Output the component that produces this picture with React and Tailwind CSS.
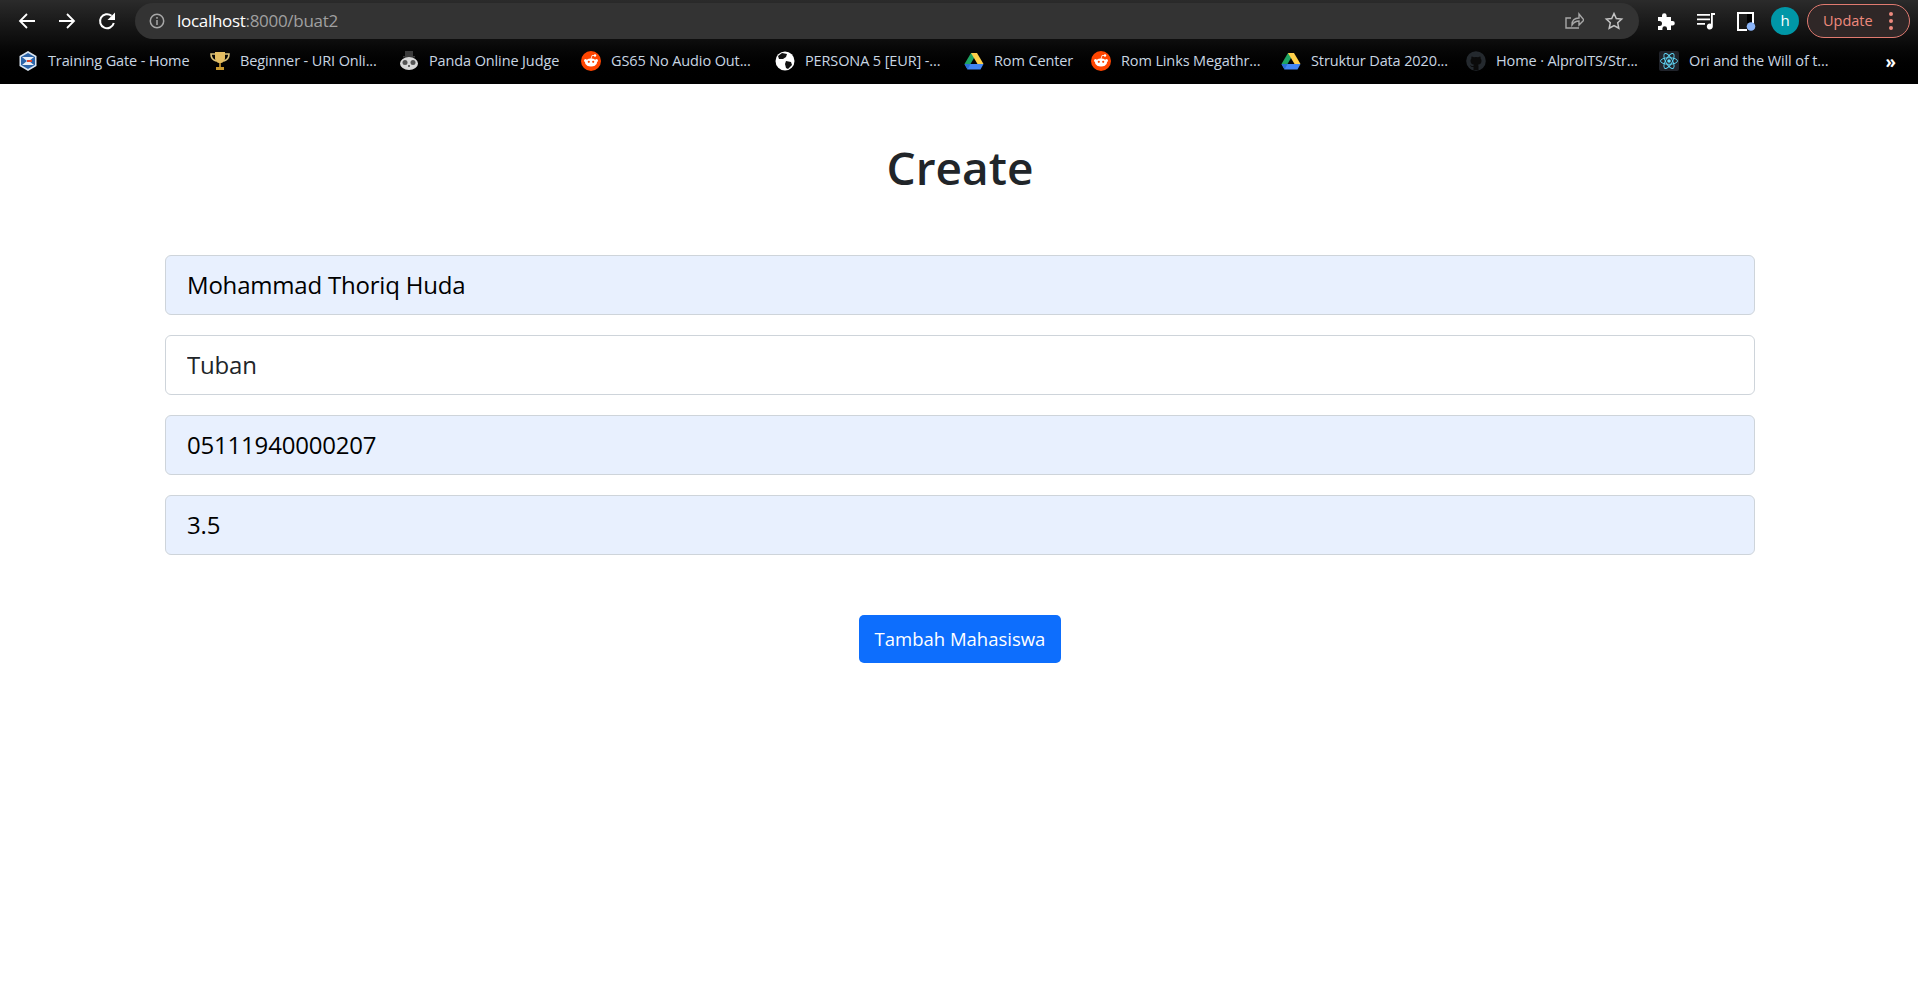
const bookmarks = [
  { icon: 'gate', label: 'Training Gate - Home', width: 'w-[192px]' },
  { icon: 'trophy', label: 'Beginner - URI Onli...', width: 'w-[189px]' },
  { icon: 'panda', label: 'Panda Online Judge', width: 'w-[182px]' },
  { icon: 'reddit', label: 'GS65 No Audio Out...', width: 'w-[194px]' },
  { icon: 'globe', label: 'PERSONA 5 [EUR] -...', width: 'w-[189px]' },
  { icon: 'drive', label: 'Rom Center', width: 'w-[127px]' },
  { icon: 'reddit', label: 'Rom Links Megathr...', width: 'w-[190px]' },
  { icon: 'drive', label: 'Struktur Data 2020...', width: 'w-[185px]' },
  { icon: 'github', label: 'Home · AlproITS/Str...', width: 'w-[193px]' },
  { icon: 'react', label: 'Ori and the Will of t...', width: 'w-[170px]' },
]

function Favicon({ type }) {
  if (type === 'gate') {
    return (
      <svg viewBox="0 0 20 20" className="h-5 w-5">
        <path d="M10 0 18.500 5v10L10 20 1.500 15V5z" fill="#dbe6f2" />
        <path d="M10 2 17 6v8l-7 4-7-4V6z" fill="#2a63a8" />
        <path d="M4 6h12l-5 4 5 4H4l5-4z" fill="#e9eef5" />
        <path d="M9 9h5v2H9z" fill="#d8452e" />
      </svg>
    )
  }
  if (type === 'trophy') {
    return (
      <svg viewBox="0 0 20 20" className="h-5 w-5">
        <path d="M5 3H1c0 4 2 6 5 7M15 3h4c0 4-2 6-5 7" fill="none" stroke="#d9c27c" strokeWidth="1.600" />
        <path d="M5 1h10v6c0 3-2 5-5 5S5 10 5 7z" fill="#e3bd62" />
        <path d="M9 12h2v4H9z" fill="#a87f28" />
        <path d="M6 16h8v3H6z" fill="#c9992f" />
      </svg>
    )
  }
  if (type === 'panda') {
    return (
      <svg viewBox="0 0 20 20" className="h-5 w-5">
        <path d="M6 0h8v5H6zM4 5h12v1.500H4z" fill="#3b3b3b" />
        <ellipse cx="10" cy="12.500" rx="9" ry="6.500" fill="#d8d8d8" />
        <ellipse cx="6" cy="11.500" rx="2.500" ry="2.500" fill="#555" />
        <ellipse cx="14" cy="11.500" rx="2.500" ry="2.500" fill="#555" />
        <circle cx="10" cy="15" r="1" fill="#444" />
      </svg>
    )
  }
  if (type === 'reddit') {
    return (
      <svg viewBox="0 0 20 20" className="h-5 w-5">
        <circle cx="10" cy="10" r="10" fill="#ff4500" />
        <ellipse cx="10" cy="11.500" rx="6" ry="4" fill="#fff" />
        <circle cx="4.500" cy="9.500" r="1.500" fill="#fff" />
        <circle cx="15.500" cy="9.500" r="1.500" fill="#fff" />
        <circle cx="14" cy="4.500" r="1.200" fill="#fff" />
        <path d="M10 8 11 4.500 14 4.500" stroke="#fff" strokeWidth="0.800" fill="none" />
        <circle cx="7.800" cy="10.800" r="1.100" fill="#ff4500" />
        <circle cx="12.200" cy="10.800" r="1.100" fill="#ff4500" />
      </svg>
    )
  }
  if (type === 'globe') {
    return (
      <svg viewBox="0 0 20 20" className="h-5 w-5">
        <circle cx="10" cy="10" r="9.500" fill="#fff" />
        <path d="M7 2 12 3 11 6 8 8 4 8 3 5zM11 10l5 1 1 3-4 4-2-1-1-4z" fill="#111" />
      </svg>
    )
  }
  if (type === 'drive') {
    return (
      <svg viewBox="0 0 20 20" className="h-5 w-5">
        <path d="M7 2h6l-6.500 11H.500z" fill="#1fa463" />
        <path d="M7 2h6l6.500 11h-6z" fill="#ffd04b" />
        <path d="M4 13h15.500l-3 5.500H3.500L.500 13z" fill="#4285f4" />
        <path d="M.500 13h6l-3 5.500z" fill="#2a6fd6" />
      </svg>
    )
  }
  if (type === 'github') {
    return (
      <svg viewBox="0 0 20 20" className="h-5 w-5">
        <circle cx="10" cy="10" r="9.800" fill="#24292e" />
        <path d="M7.500 19v-3c-2 .3-3-.7-3.500-2 1 .4 1.500 1.300 3.500 1-.1-.6.100-1 .5-1.300C5.500 13.300 4.500 12 4.500 9.800c0-1 .3-1.700.9-2.400-.1-.6-.1-1.400.2-2 .9 0 1.600.4 2.200.9a7 7 0 0 1 4.400 0c.6-.5 1.300-.9 2.200-.9.300.6.300 1.400.2 2 .6.700.9 1.400.9 2.400 0 2.200-1 3.500-3.500 3.900.4.400.5.900.5 1.500V19z" fill="#0b0b0b" />
      </svg>
    )
  }
  return (
    <svg viewBox="0 0 20 20" className="h-5 w-5">
      <rect width="20" height="20" rx="2" fill="#20232a" />
      <circle cx="10" cy="10" r="1.800" fill="#61dafb" />
      <g fill="none" stroke="#61dafb" strokeWidth="0.900">
        <ellipse cx="10" cy="10" rx="8.500" ry="3.300" />
        <ellipse cx="10" cy="10" rx="8.500" ry="3.300" transform="rotate(60 10 10)" />
        <ellipse cx="10" cy="10" rx="8.500" ry="3.300" transform="rotate(120 10 10)" />
      </g>
    </svg>
  )
}

function BrowserChrome() {
  return (
    <header className="bg-gradient-to-b from-[#2b2b2b] via-[#0c0c0c] to-black font-['Open_Sans',sans-serif]">
      <div className="flex h-[41px] items-center">
        <div className="ml-[17px] flex items-center gap-[20px]">
          <svg viewBox="0 0 20 20" className="h-5 w-5" fill="none" stroke="#fff" strokeWidth="1.800">
            <path d="M18 10H3M10 3l-7 7 7 7" />
          </svg>
          <svg viewBox="0 0 20 20" className="h-5 w-5" fill="none" stroke="#fff" strokeWidth="1.800">
            <path d="M2 10h15M10 3l7 7-7 7" />
          </svg>
          <svg viewBox="0 0 20 20" className="h-5 w-5" fill="none" stroke="#fff" strokeWidth="2">
            <path d="M16.800 12A7 7 0 1 1 14.500 4.800" />
            <path d="M18 1.500v7.500h-7.500z" fill="#fff" stroke="none" />
          </svg>
        </div>
        <div className="ml-[18px] flex h-[36px] w-[1504px] items-center rounded-full bg-[#333333] pl-[14px] pr-[15px]">
          <svg viewBox="0 0 16 16" className="h-4 w-4" fill="none" stroke="#a8a8a8" strokeWidth="1.500">
            <circle cx="8" cy="8" r="6.700" />
            <path d="M8 7v5M8 4v1.800" />
          </svg>
          <p className="ml-[12px] text-[17px] leading-none tracking-[-0.3px] text-[#a0a0a0]">
            <span className="text-white">localhost</span>:8000/buat2
          </p>
          <div className="ml-auto flex items-center gap-[20px]">
            <svg viewBox="0 0 20 20" className="h-5 w-5" fill="none" stroke="#a8a8a8" strokeWidth="1.400">
              <path d="M15 17H2V7h5M8 14c0-5 3-7 7-7V3l5 6-5 5v-4c-3 0-5 1-7 4z" />
            </svg>
            <svg viewBox="0 0 20 20" className="h-5 w-5" fill="none" stroke="#c4c4c4" strokeWidth="1.500">
              <path d="M10 2.500l2.300 5 5.400.6-4 3.700 1.100 5.400-4.800-2.700-4.800 2.700 1.100-5.400-4-3.700 5.400-.6z" />
            </svg>
          </div>
        </div>
        <div className="ml-[17px] flex items-center gap-[20px]">
          <svg viewBox="0 0 20 20" className="h-5 w-5" fill="#fff">
            <path d="M2 6h4V4.500a2.300 2.300 0 0 1 4.600 0V6h4.400v4h1.500a2.300 2.300 0 0 1 0 4.600H15V19h-4v-1.500a2.300 2.300 0 0 0-4.600 0V19H2v-4h1.500a2.500 2.500 0 0 0 0-5H2z" />
          </svg>
          <svg viewBox="0 0 20 20" className="h-5 w-5" fill="#fff">
            <path d="M1 3h13v1.800H1zM1 7.500h13v1.800H1zM1 12h8v1.800H1zM15 2h4v2h-2.200v11.500a3 3 0 1 1-1.800-2.700z" />
          </svg>
          <svg viewBox="0 0 20 20" className="h-5 w-5">
            <path d="M1 1h17v11h-2V3H3v15h8v2H1z" fill="#fff" />
            <path d="M11 3h5v9h-5z" fill="#000" />
            <circle cx="15" cy="15.500" r="4.300" fill="#8ab4f8" />
          </svg>
        </div>
        <div className="ml-[15px] flex h-7 w-7 items-center justify-center rounded-full bg-[#0097a7] text-[15px] text-white">h</div>
        <div className="ml-[8px] flex h-[34px] w-[103px] items-center rounded-full border border-[#e07a70] bg-[#2f2727] pl-[15px] text-[14.500px] text-[#ee8a7e]">
          Update
          <span className="ml-[16px] flex flex-col gap-[3px]">
            <span className="h-[4px] w-[4px] rounded-full bg-[#ee8a7e]" />
            <span className="h-[4px] w-[4px] rounded-full bg-[#ee8a7e]" />
            <span className="h-[4px] w-[4px] rounded-full bg-[#ee8a7e]" />
          </span>
        </div>
      </div>
      <nav className="flex h-[43px] items-center pb-[3px] pl-[18px]">
        {bookmarks.map((item, i) => (
          <div key={i} className={`flex shrink-0 items-center gap-[10px] ${item.width}`}>
            <Favicon type={item.icon} />
            <span className="whitespace-nowrap text-[14.500px] tracking-[-0.12px] text-[#c9d6e2]">{item.label}</span>
          </div>
        ))}
        <span className="ml-auto mr-[22px] text-[17px] font-bold leading-none text-white">»</span>
      </nav>
    </header>
  )
}

function Field({ value, autofill }) {
  return (
    <input
      readOnly
      value={value}
      className={`block h-[60px] w-full rounded-[6px] border border-[#ced4da] px-[21px] pb-[2px] text-[24px] tracking-[-0.2px] outline-none ${autofill ? 'bg-[#e8f0fe] text-black' : 'bg-white text-[#212529]'}`}
    />
  )
}

export default function App() {
  return (
    <div className="min-h-[987px] bg-white font-['Open_Sans',sans-serif]">
      <BrowserChrome />
      <main className="pl-[165px] pr-[163px] pt-[53px]">
        <h1 className="text-center text-[46px] font-semibold leading-[60px] text-[#212529]">Create</h1>
        <form className="mt-[58px] flex flex-col gap-5">
          <Field value="Mohammad Thoriq Huda" autofill />
          <Field value="Tuban" />
          <Field value="05111940000207" autofill />
          <Field value="3.5" autofill />
        </form>
        <div className="mt-[60px] flex justify-center">
          <button type="button" className="h-[48px] w-[202px] rounded-[5px] bg-[#0d6efd] text-[18.500px] text-white">
            Tambah Mahasiswa
          </button>
        </div>
      </main>
    </div>
  )
}
